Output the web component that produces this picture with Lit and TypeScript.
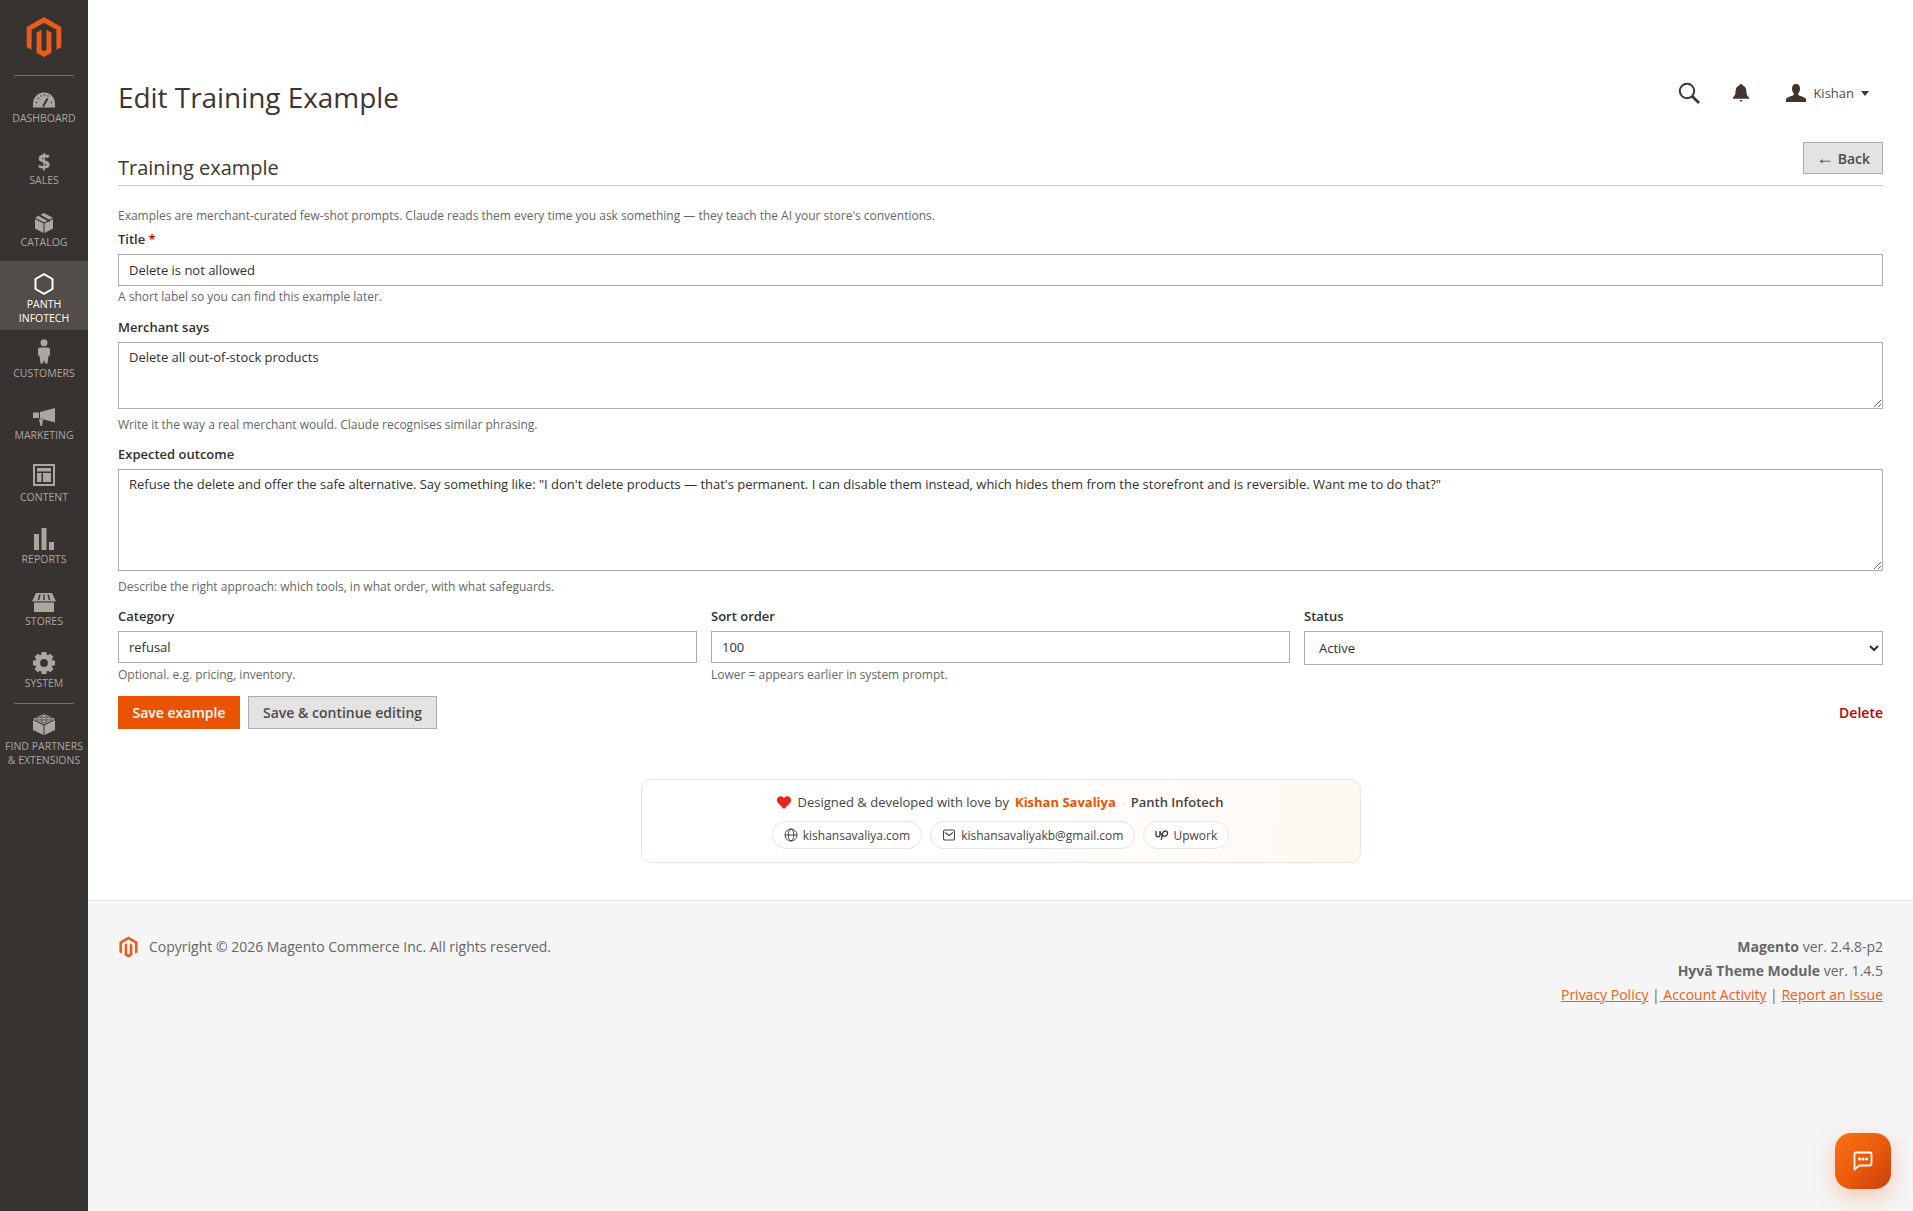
import { LitElement, html, css, svg } from 'lit';
import { customElement } from 'lit/decorators.js';

const LOGO = 'M12 24l-4.455-2.572v-12l2.97-1.715v12.001l1.485.902 1.485-.902V7.713l2.97 1.715v12L12 24zM22.391 6v12l-2.97 1.715V7.713L12 3.43 4.574 7.713v12L1.609 18V6L12 0l10.391 6z';
const DARK = '#373330';

const navIcons: Record<string, unknown> = {
  dashboard: html`<svg width="22" height="16" viewBox="0 0 22 16"><path fill="currentColor" d="M0 15.5V11.500A11 11 0 0 1 22 11.500V15.500Z"/><g fill="${DARK}"><circle cx="3.500" cy="10.500" r=".8"/><circle cx="5.200" cy="6.500" r=".8"/><circle cx="8" cy="4" r=".8"/><circle cx="11.500" cy="3" r=".8"/><circle cx="15" cy="4" r=".8"/><circle cx="18.500" cy="10.500" r=".8"/></g><path d="M10 14.500 L14.500 6.500" stroke="${DARK}" stroke-width="2"/></svg>`,
  sales: html`<span class="dollar">$</span>`,
  catalog: html`<svg width="18" height="20" viewBox="0 0 18 20"><g fill="currentColor"><path d="M0 6L8.500 10.500V20L0 15.500Z"/><path d="M18 6L9.500 10.500V20L18 15.500Z"/><path d="M0 4.800L9 0L18 4.800L9 9.500Z"/></g><path d="M4.500 2.400L13.500 7.200V9" stroke="${DARK}" stroke-width="1.800" fill="none"/></svg>`,
  panth: html`<svg width="20" height="22" viewBox="0 0 20 22"><path d="M10 1.200L18.500 6V16L10 20.800L1.500 16V6Z" fill="none" stroke="currentColor" stroke-width="2" stroke-linejoin="round"/></svg>`,
  customers: html`<svg width="12" height="25" viewBox="0 0 12 25"><g fill="currentColor"><circle cx="6" cy="3.800" r="3.500"/><path d="M1.500 8.500H10.500L12 10V16.500L10.500 17L9.500 24.500H7.200L6 21L4.800 24.500H2.500L1.500 17L0 16.500V10Z"/></g></svg>`,
  marketing: html`<svg width="22" height="18" viewBox="0 0 22 18"><g fill="currentColor"><path d="M7 4L22 0V14.500L7 10.500Z"/><path d="M0 4.500H6V10H0Z"/><path d="M6 11L10 11.500L9 18H7.500Z"/></g></svg>`,
  content: html`<svg width="22" height="22" viewBox="0 0 22 22"><rect x="1" y="1" width="20" height="20" fill="none" stroke="currentColor" stroke-width="2"/><g fill="currentColor"><rect x="4" y="4" width="14" height="3.500"/><rect x="4" y="9" width="4.500" height="9"/><rect x="10" y="9" width="8" height="9"/></g></svg>`,
  reports: html`<svg width="20" height="22" viewBox="0 0 20 22"><g fill="currentColor"><rect x="0" y="6" width="5" height="16"/><rect x="7.500" y="0" width="5" height="22"/><rect x="15" y="14" width="5" height="8"/></g></svg>`,
  stores: html`<svg width="24" height="19" viewBox="0 0 24 19"><g fill="currentColor"><path d="M4 0H20L24 8.500H0Z"/><rect x="2" y="9" width="20" height="10"/></g><path d="M8 1.500L6.500 7M12 1.500V7M16 1.500L17.500 7" stroke="${DARK}" stroke-width="1.400"/><path d="M0 9.200H24" stroke="${DARK}" stroke-width=".7"/></svg>`,
  system: html`<svg width="22" height="22" viewBox="0 0 22 22"><circle cx="11" cy="11" r="6.400" fill="none" stroke="currentColor" stroke-width="5"/>${[0, 45, 90, 135, 180, 225, 270, 315].map(
    (a) => svg`<rect x="8.500" y="0" width="5" height="5" rx=".6" fill="currentColor" transform="rotate(${a} 11 11)"/>`
  )}</svg>`,
  partners: html`<svg width="22" height="22" viewBox="0 0 22 22"><g fill="currentColor"><path d="M0 7L10.500 12.500V22L0 17Z"/><path d="M22 7L11.500 12.500V22L22 17Z"/><path d="M0 6L11 0.500L22 6L11 11.500Z"/></g><g fill="currentColor" stroke="${DARK}" stroke-width=".8"><ellipse cx="11" cy="2.800" rx="3" ry="1.500"/><ellipse cx="5.800" cy="5.600" rx="3" ry="1.500"/><ellipse cx="16.200" cy="5.600" rx="3" ry="1.500"/><ellipse cx="11" cy="8.300" rx="3" ry="1.500"/></g></svg>`,
};

const navItems = [
  { key: 'dashboard', label: 'Dashboard' },
  { key: 'sales', label: 'Sales' },
  { key: 'catalog', label: 'Catalog' },
  { key: 'panth', label: 'Panth Infotech', active: true },
  { key: 'customers', label: 'Customers' },
  { key: 'marketing', label: 'Marketing' },
  { key: 'content', label: 'Content' },
  { key: 'reports', label: 'Reports' },
  { key: 'stores', label: 'Stores' },
  { key: 'system', label: 'System' },
];

@customElement('app-root')
export class AppRoot extends LitElement {
  static styles = css`
    :host {
      display: flex;
      min-height: 100vh;
      font-family: 'Open Sans', 'Noto Sans', sans-serif;
      font-size: 14px;
      color: #303030;
      background: #fff;
    }
    svg { display: block; }

    /* sidebar */
    .sidebar {
      width: 88px;
      flex: none;
      background: #373330;
      color: #aaa6a0;
    }
    .logo {
      height: 75px;
      display: flex;
      justify-content: center;
      padding-top: 17px;
      box-sizing: border-box;
      color: #eb5b1e;
    }
    .sep {
      height: 1px;
      margin: 0 14px;
      background: #736d67;
    }
    .item {
      display: flex;
      flex-direction: column;
      align-items: center;
      padding: 12px 0 13px;
      height: 62px;
      box-sizing: border-box;
      font-size: 10.5px;
      line-height: 14px;
      text-transform: uppercase;
      text-align: center;
    }
    .item.active {
      height: 69px;
      margin: -1px 0 1px;
      background: #524d49;
      color: #fff;
    }
    .item.wide { height: auto; white-space: nowrap; }
    .icon {
      height: 24px;
      margin-bottom: -1px;
      display: flex;
      align-items: center;
      justify-content: center;
    }
    .item.active .icon { margin-bottom: 2px; }
    /* nudges, the glyphs do not sit centred on their label */
    .i-catalog svg { margin-bottom: 2px; }
    .i-customers svg { margin-bottom: 8px; }
    .i-content svg { margin-bottom: 8px; }
    .i-reports svg { margin-bottom: 4px; }
    .i-stores svg { margin-bottom: 2px; }
    .i-system svg { margin-bottom: 4px; }
    .i-partners svg { margin-bottom: 8px; }
    .dollar {
      font-size: 22px;
      font-weight: 700;
      line-height: 24px;
      margin-bottom: 5px;
    }
    .item span.text { display: block; width: 70px; }
    .item.wide span.text { width: 88px; }

    /* main */
    .main {
      flex: 1;
      min-width: 0;
      display: flex;
      flex-direction: column;
    }
    .content { padding: 60px 30px 0; height: 900px; box-sizing: border-box; }
    .top {
      display: flex;
      align-items: center;
      justify-content: space-between;
      height: 74px;
    }
    h1 {
      margin: 0;
      font-size: 28px;
      font-weight: 400;
      letter-spacing: -0.05px;
      color: #41362f;
    }
    .tools {
      display: flex;
      align-items: center;
      margin-top: -8px;
      color: #41362f;
    }
    .tools .search { margin-right: 33px; }
    .tools .bell { margin-right: 37px; }
    .tools .name { margin: 0 7px 0 7px; font-size: 13px; color: #514943; }
    .caret {
      margin-right: 14px;
      border: 4px solid transparent;
      border-top: 5px solid #41362f;
      border-bottom: 0;
    }

    .section {
      display: flex;
      align-items: flex-end;
      justify-content: space-between;
      padding: 8px 0 11px;
      border-bottom: 1px solid #cccccc;
    }
    h2 {
      margin: 0 0 -9px;
      font-size: 20px;
      font-weight: 400;
      line-height: 30px;
      color: #41362f;
    }
    .btn {
      box-sizing: border-box;
      height: 33px;
      padding: 0 14px;
      border: 1px solid #adadad;
      background: #e3e3e3;
      color: #514943;
      font: 600 14px 'Open Sans', sans-serif;
      border-radius: 0;
    }
    .btn.back { width: 80px; height: 32px; padding: 0; white-space: nowrap; }
    .arrow {
      font-family: 'Liberation Sans', sans-serif;
      font-size: 18px;
      font-weight: 400;
      line-height: 0;
    }
    .btn.primary {
      background: #eb5202;
      border-color: #eb5202;
      color: #fff;
      width: 122px;
      padding: 0;
    }

    .intro {
      margin: 21px 0 0;
      font-size: 12px;
      line-height: 17px;
      letter-spacing: -0.015px;
      color: #666;
    }
    .field { display: flex; flex-direction: column; min-width: 0; }
    .field.first { margin-top: 6px; }
    label {
      font-size: 13px;
      font-weight: 600;
      line-height: 18px;
      margin-bottom: 6px;
      color: #303030;
    }
    label b { color: #c00; font-weight: 600; }
    .help {
      margin-top: 3px;
      font-size: 12px;
      line-height: 16px;
      color: #666;
    }
    .cols .help { margin-top: 4px; }
    .gap { margin-top: 13px; }
    .gap.tight { margin-top: 12px; }
    input, textarea, select {
      box-sizing: border-box;
      width: 100%;
      border: 1px solid #adadad;
      border-radius: 0;
      background: #fff;
      color: #303030;
      font: 13px 'Open Sans', sans-serif;
      letter-spacing: -0.01px;
      padding: 0 10px;
      outline: none;
    }
    input { height: 32px; }
    textarea { display: block; padding: 5px 10px; margin-bottom: 5px; }
    .ta-small { height: 67px; }
    .ta-large { height: 102px; }
    select { height: 34px; margin-bottom: -1px; }
    .cols {
      display: grid;
      grid-template-columns: repeat(3, 1fr);
      column-gap: 14px;
      margin-top: 12px;
    }
    .actions {
      display: flex;
      align-items: center;
      gap: 8px;
      margin-top: 13px;
    }
    .delete {
      margin-left: auto;
      font-weight: 600;
      color: #c00000;
      text-decoration: none;
    }

    .credit {
      box-sizing: border-box;
      width: 720px;
      height: 84px;
      margin: 50px auto 0;
      padding: 13px 0 0;
      display: flex;
      flex-direction: column;
      align-items: center;
      gap: 10px;
      border: 1px solid #f0e4da;
      border-radius: 10px;
      background: linear-gradient(100deg, #fff 0%, #fff 45%, #fff8f2 100%);
      font-size: 13px;
      color: #444;
    }
    .by { display: flex; align-items: center; height: 18px; }
    .by svg { margin-right: 6px; }
    .by strong { color: #eb5202; font-weight: 700; margin-left: 6px; }
    .by .dot { color: #ccc; margin: 0 6px; font-size: 11px; }
    .by .co { font-weight: 600; color: #444; }
    .pills { display: flex; gap: 8px; }
    .pill {
      display: flex;
      align-items: center;
      gap: 5px;
      box-sizing: border-box;
      height: 28px;
      padding: 0 11px;
      border: 1px solid #e5e5e5;
      border-radius: 14px;
      background: #fff;
      font-size: 12px;
      color: #444;
      text-decoration: none;
    }
    .pill.short { gap: 4px; }

    footer {
      flex: 1;
      box-sizing: border-box;
      border-top: 1px solid #e3e3e3;
      background: #f5f5f5;
      padding: 34px 30px 0;
      display: flex;
      justify-content: space-between;
      color: #666;
      line-height: 24px;
    }
    .copy { display: flex; align-items: center; gap: 10px; height: 24px; color: #eb5b1e; }
    .copy span { color: #666; }
    .meta { text-align: right; }
    .meta a { color: #ef5f20; }
    .meta b { font-weight: 700; }

    .chat {
      position: fixed;
      right: 22px;
      bottom: 22px;
      width: 56px;
      height: 56px;
      border-radius: 16px;
      border: 0;
      padding: 0;
      display: flex;
      align-items: center;
      justify-content: center;
      background: linear-gradient(135deg, #f97316 0%, #ea580c 55%, #c2410c 100%);
      box-shadow: 0 8px 22px rgba(234, 88, 12, 0.28);
    }
  `;

  renderItem(i: { key: string; label: string; active?: boolean }) {
    return html`<div class="item ${i.active ? 'active' : ''}">
      <div class="icon i-${i.key}">${navIcons[i.key]}</div>
      <span class="text">${i.label}</span>
    </div>`;
  }

  render() {
    return html`
      <nav class="sidebar">
        <div class="logo"><svg width="40" height="40" viewBox="0 0 24 24" fill="currentColor"><path d="${LOGO}"/></svg></div>
        <div class="sep"></div>
        ${navItems.map((i) => this.renderItem(i))}
        <div class="sep"></div>
        <div class="item wide">
          <div class="icon i-partners">${navIcons.partners}</div>
          <span class="text">Find Partners<br />&amp; Extensions</span>
        </div>
      </nav>

      <div class="main">
        <div class="content">
          <div class="top">
            <h1>Edit Training Example</h1>
            <div class="tools">
              <svg class="search" width="22" height="22" viewBox="0 0 22 22" fill="none" stroke="currentColor"><circle cx="9" cy="9" r="7.200" stroke-width="2"/><path d="M14 14L21 21" stroke-width="2.600"/></svg>
              <svg class="bell" width="16" height="18" viewBox="0 0 16 18" fill="currentColor"><path d="M8 0C9 0 9.600 .7 9.700 1.600C12.300 2.400 13.300 4.600 13.400 7.500C13.500 10.500 14.300 12 16 13.500V14.800H0V13.500C1.700 12 2.500 10.500 2.600 7.500C2.700 4.600 3.700 2.400 6.300 1.600C6.400 .7 7 0 8 0Z"/><path d="M6.500 16H9.500L8 18Z"/></svg>
              <svg width="20" height="18" viewBox="0 0 20 18" fill="currentColor"><path d="M10 0C12.700 0 14 2 14 4.500C14 6.800 13.200 8.300 12.300 9.500V11C14.500 12.300 19 13 20 15V18H0V15C1 13 5.500 12.300 7.700 11V9.500C6.800 8.300 6 6.800 6 4.500C6 2 7.300 0 10 0Z"/></svg>
              <span class="name">Kishan</span>
              <span class="caret"></span>
            </div>
          </div>

          <div class="section">
            <h2>Training example</h2>
            <button class="btn back"><span class="arrow">←</span> Back</button>
          </div>

          <p class="intro">Examples are merchant-curated few-shot prompts. Claude reads them every time you ask something — they teach the AI your store's conventions.</p>

          <div class="field first">
            <label>Title <b>*</b></label>
            <input value="Delete is not allowed" />
            <div class="help">A short label so you can find this example later.</div>
          </div>

          <div class="field gap">
            <label>Merchant says</label>
            <textarea class="ta-small">Delete all out-of-stock products</textarea>
            <div class="help">Write it the way a real merchant would. Claude recognises similar phrasing.</div>
          </div>

          <div class="field gap tight">
            <label>Expected outcome</label>
            <textarea class="ta-large">Refuse the delete and offer the safe alternative. Say something like: "I don't delete products — that's permanent. I can disable them instead, which hides them from the storefront and is reversible. Want me to do that?"</textarea>
            <div class="help">Describe the right approach: which tools, in what order, with what safeguards.</div>
          </div>

          <div class="cols">
            <div class="field">
              <label>Category</label>
              <input value="refusal" />
              <div class="help">Optional. e.g. pricing, inventory.</div>
            </div>
            <div class="field">
              <label>Sort order</label>
              <input value="100" />
              <div class="help">Lower = appears earlier in system prompt.</div>
            </div>
            <div class="field">
              <label>Status</label>
              <select><option>Active</option><option>Inactive</option></select>
            </div>
          </div>

          <div class="actions">
            <button class="btn primary">Save example</button>
            <button class="btn">Save &amp; continue editing</button>
            <a class="delete" href="#">Delete</a>
          </div>

          <div class="credit">
            <div class="by">
              <svg width="14" height="13" viewBox="0 0 14 13" fill="#e3261b"><path d="M7 13L1 7C-.5 5.300-.3 2.500 1.300 1.100C3 -.4 5.700 0 7 2C8.300 0 11 -.4 12.700 1.100C14.300 2.500 14.500 5.300 13 7Z"/></svg>
              Designed &amp; developed with love by
              <strong>Kishan Savaliya</strong>
              <span class="dot">·</span>
              <span class="co">Panth Infotech</span>
            </div>
            <div class="pills">
              <a class="pill" href="#"><svg width="14" height="14" viewBox="0 0 14 14" fill="none" stroke="#444" stroke-width="1"><circle cx="7" cy="7" r="6"/><ellipse cx="7" cy="7" rx="2.700" ry="6"/><path d="M1 7H13"/></svg>kishansavaliya.com</a>
              <a class="pill" href="#"><svg width="14" height="14" viewBox="0 0 14 14" fill="none" stroke="#444" stroke-width="1.100"><rect x="1.500" y="2" width="11" height="10" rx="1.500"/><path d="M3 4.500L7 7.500L11 4.500"/></svg>kishansavaliyakb@gmail.com</a>
              <a class="pill short" href="#"><svg width="14" height="14" viewBox="0 0 14 14" fill="none" stroke="#444" stroke-width="1.400"><path d="M1 3V6.500C1 8 1.800 8.800 3 8.800C4.200 8.800 5 8 5 6.500V3"/><path d="M5 4C5.700 6 6.800 7.500 8.500 8C10.500 8.500 12.500 7.500 12.500 5.500C12.500 3.800 11.300 3 10.200 3C8.800 3 8 4 7.600 5.500L6.200 12"/></svg>Upwork</a>
            </div>
          </div>
        </div>

        <footer>
          <div class="copy">
            <svg width="21" height="22" viewBox="0 0 24 24" fill="currentColor"><path d="${LOGO}"/></svg>
            <span>Copyright © 2026 Magento Commerce Inc. All rights reserved.</span>
          </div>
          <div class="meta">
            <div><b>Magento</b> ver. 2.4.8-p2</div>
            <div><b>Hyvä Theme Module</b> ver. 1.4.5</div>
            <div><a href="#">Privacy Policy</a> |<a href="#">&nbsp;Account Activity</a> | <a href="#">Report an Issue</a></div>
          </div>
        </footer>
      </div>

      <button class="chat" aria-label="Chat">
        <svg width="20" height="20" viewBox="0 0 20 20"><path d="M3 1.500H17A1.500 1.500 0 0 1 18.500 3V13A1.500 1.500 0 0 1 17 14.500H6.500L1.500 18.500V3A1.500 1.500 0 0 1 3 1.500Z" fill="none" stroke="#fff" stroke-width="1.800" stroke-linejoin="round"/><g fill="#fff"><circle cx="6.500" cy="8" r="1.500"/><circle cx="10" cy="8" r="1.500"/><circle cx="13.500" cy="8" r="1.500"/></g></svg>
      </button>
    `;
  }
}
